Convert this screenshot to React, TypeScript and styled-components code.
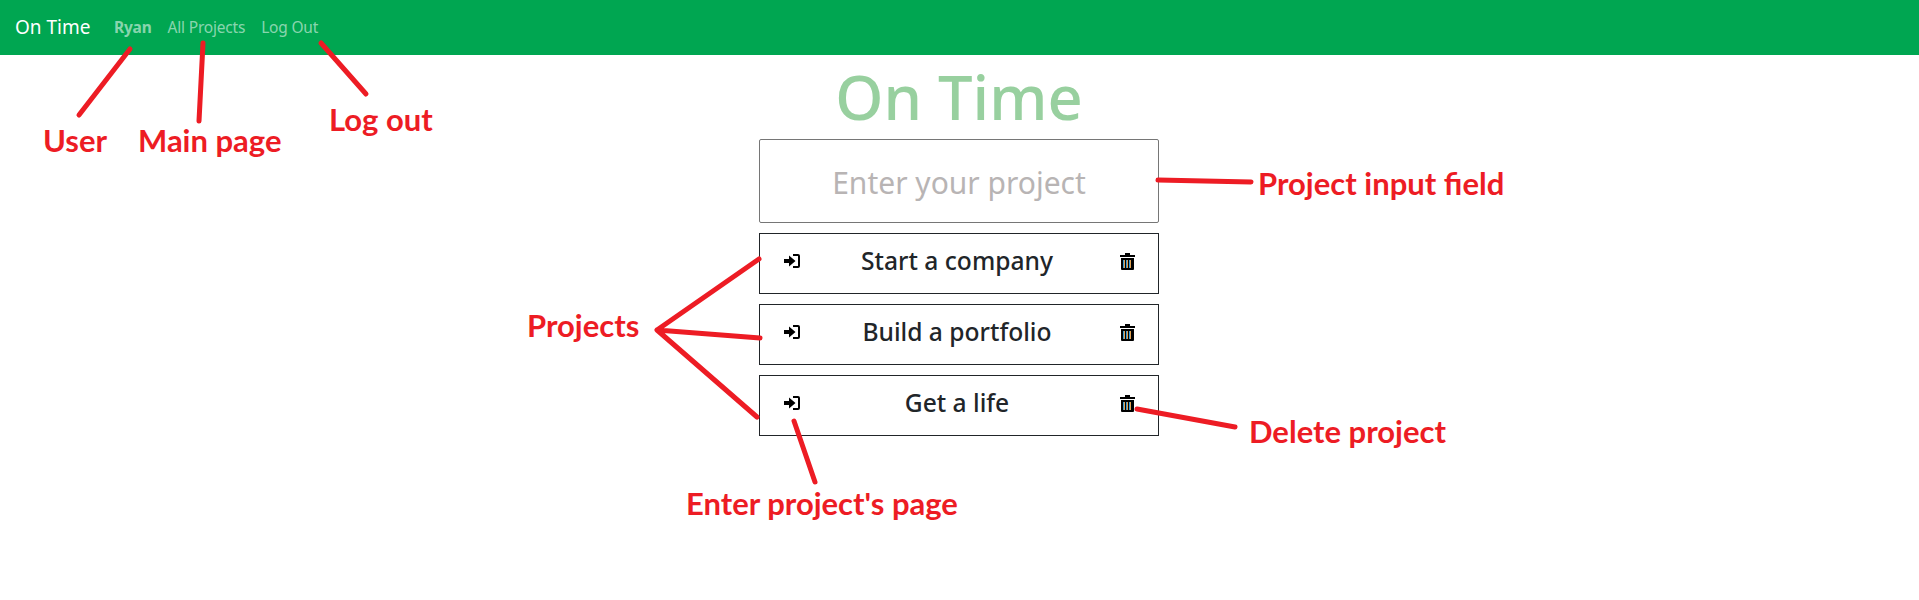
import React from "react";
import styled, { createGlobalStyle } from "styled-components";

const Global = createGlobalStyle`
  html, body { margin: 0; background: #fff; }
  body { font-family: "Noto Sans", "Open Sans", "Liberation Sans", sans-serif; color: #212529; }
`;

const Page = styled.div`
  position: relative;
  width: 1919px;
  height: 600px;
  overflow: hidden;
`;

const NavBar = styled.nav`
  display: flex;
  align-items: center;
  height: 55px;
  padding: 0 15px 1px;
  background: #00a651;
  box-sizing: border-box;
`;

const Brand = styled.a`
  font-size: 19px;
  color: #fff;
  margin-right: 25px;
  width: 74px;
  white-space: nowrap;
`;

const NavLink = styled.a<{ $bold?: boolean }>`
  font-size: 15.5px;
  letter-spacing: -0.2px;
  color: rgba(255, 255, 255, 0.55);
  font-weight: ${(p) => (p.$bold ? 700 : 400)};
  margin-right: 16px;
  white-space: nowrap;
`;

const Main = styled.main`
  display: flex;
  flex-direction: column;
  align-items: center;
  padding-right: 1px;
`;

const Title = styled.h1`
  margin: 0;
  height: 84px;
  font-size: 61.5px;
  line-height: 82px;
  font-weight: 500;
  color: #98d09f;
`;

const ProjectInput = styled.input`
  display: block;
  width: 400px;
  height: 84px;
  box-sizing: border-box;
  border: 1px solid #767676;
  border-radius: 2px;
  padding: 2px 0 0;
  outline: none;
  margin-bottom: 10px;
  text-align: center;
  font-family: inherit;
  font-size: 30px;
  &::placeholder {
    color: #b8b4b4;
    opacity: 1;
  }
`;

const ProjectList = styled.ul`
  display: flex;
  flex-direction: column;
  gap: 10px;
  list-style: none;
  margin: 0;
  padding: 0;
`;

const ProjectRow = styled.li`
  display: grid;
  grid-template-columns: 16px 1fr 15px;
  align-items: center;
  width: 400px;
  height: 61px;
  box-sizing: border-box;
  padding: 0 23px 5px 24px;
  border: 1px solid #212529;
`;

const ProjectName = styled.span`
  padding: 0 6px 1px 0;
  text-align: center;
  font-size: 24.6px;
  font-weight: 500;
  color: #212529;
`;

const IconSvg = styled.svg`
  display: block;
`;

const Annotation = styled.span<{ $x: number; $y: number }>`
  position: absolute;
  left: ${(p) => p.$x}px;
  top: ${(p) => p.$y}px;
  font-family: Lato, "Open Sans", sans-serif;
  font-size: 31px;
  line-height: 36px;
  font-weight: 700;
  color: #ed1c24;
  white-space: nowrap;
`;

const Arrows = styled.svg`
  position: absolute;
  left: 0;
  top: 0;
`;

const EnterIcon = () => (
  <IconSvg width="16" height="14" viewBox="0 0 16 14">
    <path d="M0 5h5V1.5L11.5 7 5 12.5V9H0z" fill="#000" />
    <path d="M9 1h5a1 1 0 0 1 1 1v10a1 1 0 0 1-1 1H9" fill="none" stroke="#000" strokeWidth="2" />
  </IconSvg>
);

const TrashIcon = () => (
  <IconSvg width="15" height="17" viewBox="0 0 15 17">
    <path d="M0 2h5V0h5v2h5v2H0z" fill="#000" />
    <path d="M1 5h13v11a1 1 0 0 1-1 1H2a1 1 0 0 1-1-1z" fill="#000" />
    <path d="M3 7h1v8H3zM6 7h1v8H6zM9 7h1v8H9z" fill="#3a9ad0" />
    <path d="M4 7h1v8H4zM7 7h1v8H7zM10 7h1v8h-1z" fill="#e0a050" />
  </IconSvg>
);

const lines = [
  "M130 49 79 115",
  "M203 43 199 121",
  "M321 43 366 94",
  "M1158 180 1251 182",
  "M759 259 657 330 760 338M657 330 757 417",
  "M794 421 815 482",
  "M1137 409 1235 427",
];

const labels: [string, number, number][] = [
  ["User", 43, 122],
  ["Main page", 138, 122],
  ["Log out", 329, 101],
  ["Project input field", 1258, 165],
  ["Projects", 527, 307],
  ["Delete project", 1249, 413],
  ["Enter project's page", 686, 485],
];

const projects = ["Start a company", "Build a portfolio", "Get a life"];

export default function App() {
  return (
    <Page>
      <Global />
      <NavBar>
        <Brand>On Time</Brand>
        <NavLink $bold>Ryan</NavLink>
        <NavLink>All Projects</NavLink>
        <NavLink>Log Out</NavLink>
      </NavBar>
      <Main>
        <Title>On Time</Title>
        <ProjectInput placeholder="Enter your project" readOnly />
        <ProjectList>
          {projects.map((name) => (
            <ProjectRow key={name}>
              <EnterIcon />
              <ProjectName>{name}</ProjectName>
              <TrashIcon />
            </ProjectRow>
          ))}
        </ProjectList>
      </Main>
      <Arrows width="1919" height="600" viewBox="0 0 1919 600">
        {lines.map((d) => (
          <path key={d} d={d} fill="none" stroke="#ed1c24" strokeWidth="5" strokeLinecap="round" strokeLinejoin="round" />
        ))}
      </Arrows>
      {labels.map(([text, x, y]) => (
        <Annotation key={text} $x={x} $y={y}>
          {text}
        </Annotation>
      ))}
    </Page>
  );
}
